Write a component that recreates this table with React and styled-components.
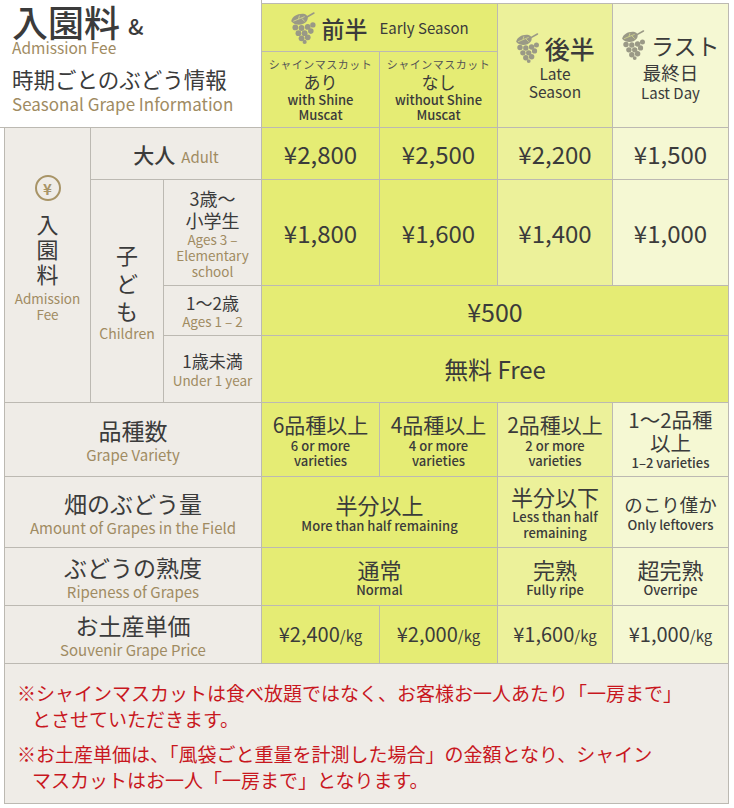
import React from 'react';
import styled, { createGlobalStyle } from 'styled-components';

const GlobalStyle = createGlobalStyle`
  body {
    margin: 0;
    background: #ffffff;
    font-family: "Noto Sans CJK JP", "Noto Sans", sans-serif;
  }
`;

const line = '1px solid #bcb9b2';

const tones = {
    white: '#ffffff',
    label: '#efece7',
    early: '#e5ec74',
    late: '#ecf19a',
    last: '#f5f8d3',
};

const Page = styled.div`
  width: 734px;
  padding: 0 0 0 4px;
  box-sizing: border-box;
`;

const Table = styled.div`
  display: grid;
  grid-template-columns: 87px 73px 98px 118px 118px 115px 116px;
  grid-template-rows: 52px 76px 52px 106px 50px 67px 74px 71px 58px 58px;
  width: 725px;
  color: #3b3b3b;
`;

const Cell = styled.div`
  grid-area: ${(p) => p.$area};
  background: ${(p) => tones[p.$tone || 'label']};
  border-right: ${line};
  border-bottom: ${line};
  border-left: ${(p) => (p.$edge ? line : 'none')};
  border-top: ${(p) => (p.$top ? line : 'none')};
  margin-top: ${(p) => (p.$top ? '3px' : '0')};
  box-sizing: border-box;
  display: flex;
  flex-direction: column;
  align-items: center;
  justify-content: center;
  text-align: center;
  min-width: 0;
`;

const HeadCell = styled.div`
  grid-area: 1 / 1 / 3 / 4;
  background: #ffffff;
  border-right: ${line};
  border-bottom: ${line};
  margin-left: -4px;
  padding: 3px 0 0 12px;
  display: flex;
  flex-direction: column;
  justify-content: flex-start;
`;

const BigTitle = styled.div`
  font-size: 36px;
  font-weight: 500;
  line-height: 37px;
  height: 36px;
  color: #3b3b3b;

  span {
    font-size: 22px;
    line-height: 1;
    margin-left: 8px;
    vertical-align: 2px;
  }
`;

const SubTitle = styled.div`
  font-size: 21.5px;
  line-height: 28px;
  color: #3b3b3b;
  margin-top: ${(p) => p.$gap || 0}px;
`;

const Tan = styled.div`
  color: #a08b62;
  font-size: ${(p) => p.$size || 14}px;
  line-height: ${(p) => p.$lh || 18}px;
`;

const Jp = styled.div`
  font-size: ${(p) => p.$size || 20}px;
  line-height: ${(p) => p.$lh || 26}px;
  font-weight: ${(p) => p.$weight || 400};
  color: #3b3b3b;
`;

const En = styled.div`
  font-size: ${(p) => p.$size || 13}px;
  line-height: ${(p) => p.$lh || 16}px;
  font-weight: ${(p) => p.$weight || 500};
  margin-left: ${(p) => p.$ml || 0}px;
  color: #3b3b3b;
`;

const Small = styled.div`
  font-size: 11px;
  line-height: 15px;
  color: #555;
  letter-spacing: 0.5px;
`;

const SeasonRow = styled.div`
  display: flex;
  align-items: center;
  gap: 4px;
`;

const Price = styled.div`
  font-size: ${(p) => p.$size || 24}px;
  line-height: 32px;
  color: #3b3b3b;

  small {
    font-size: 15px;
  }
`;

const Inline = styled.div`
  display: flex;
  align-items: baseline;
  gap: 6px;
`;

const Stack = styled.div`
  display: flex;
  flex-direction: column;
  align-items: center;
  font-size: ${(p) => p.$size}px;
  line-height: ${(p) => p.$lh}px;
  color: #3b3b3b;
`;

const FeeCol = styled(Cell)`
  justify-content: flex-start;
  padding-top: 47px;
`;

const YenMark = styled.span`
  width: 26px;
  height: 26px;
  border: 2px solid #a89467;
  border-radius: 50%;
  box-sizing: border-box;
  color: #a89467;
  font-size: 15px;
  font-weight: 700;
  line-height: 1;
  display: flex;
  align-items: center;
  justify-content: center;
  margin-bottom: 10px;
`;

const Notes = styled.div`
  width: 725px;
  box-sizing: border-box;
  background: ${tones.label};
  border-left: ${line};
  border-right: ${line};
  border-bottom: ${line};
  padding: 16px 0 15px 12px;
  height: 140px;
`;

const Note = styled.p`
  margin: 0 0 9px;
  padding-left: 15px;
  text-indent: -15px;
  color: #c8171e;
  font-size: 19px;
  line-height: 26px;
  white-space: nowrap;
`;

function Grape({ size = 28 }) {
    return (
        <svg width={size * 0.85} height={size} viewBox="0 0 26 31">
            <g fill="#9a9986">
                <path d="M1 9 C2 4 8 1 14 2 C17 3 18 6 16 9 C13 13 5 14 1 9 Z" />
                <circle cx="5" cy="15" r="2.8" />
                <circle cx="11" cy="15.5" r="2.8" />
                <circle cx="17" cy="14.5" r="2.8" />
                <circle cx="22" cy="12.5" r="2.6" />
                <circle cx="8" cy="20.5" r="2.8" />
                <circle cx="14" cy="20.5" r="2.8" />
                <circle cx="20" cy="18.5" r="2.7" />
                <circle cx="11" cy="25.5" r="2.8" />
                <circle cx="17" cy="24.5" r="2.8" />
                <circle cx="14" cy="29" r="2" />
            </g>
            <path d="M15 5.5 L23 1" stroke="#9a9986" strokeWidth="1.6" strokeLinecap="round" />
            <path d="M3 9 L14 4.5 M8 7 L9 3.5 M11 6 L14 9" stroke="#d7dc8c" strokeWidth="0.8" fill="none" />
        </svg>
    );
}

const varieties = [
    { tone: 'early', jp: '6品種以上', en: ['6 or more', 'varieties'] },
    { tone: 'early', jp: '4品種以上', en: ['4 or more', 'varieties'] },
    { tone: 'late', jp: '2品種以上', en: ['2 or more', 'varieties'] },
];

const adult = [['early', '¥2,800'], ['early', '¥2,500'], ['late', '¥2,200'], ['last', '¥1,500']];
const child = [['early', '¥1,800'], ['early', '¥1,600'], ['late', '¥1,400'], ['last', '¥1,000']];
const souvenir = [['early', '¥2,400'], ['early', '¥2,000'], ['late', '¥1,600'], ['last', '¥1,000']];

function Label({ area, jp, en }) {
    return (
        <Cell $area={area} $edge>
            <Jp $size={23} $lh={30}>{jp}</Jp>
            <Tan $size={15} $lh={19}>{en}</Tan>
        </Cell>
    );
}

export default function App() {
    return (
        <Page>
            <GlobalStyle />
            <Table>
                <HeadCell>
                    <BigTitle>入園料<span>&amp;</span></BigTitle>
                    <Tan $size={15.5} $lh={16}>Admission Fee</Tan>
                    <SubTitle $gap={10}>時期ごとのぶどう情報</SubTitle>
                    <Tan $size={17} $lh={22}>Seasonal Grape Information</Tan>
                </HeadCell>

                <Cell $area="1 / 4 / 2 / 6" $tone="early" $top>
                    <SeasonRow>
                        <Grape size={32} />
                        <Jp $size={23} $lh={30} $weight={500}>前半</Jp>
                        <En $size={15} $lh={20} $weight={400} $ml={8}>Early Season</En>
                    </SeasonRow>
                </Cell>
                <Cell $area="2 / 4 / 3 / 5" $tone="early">
                    <Small>シャインマスカット</Small>
                    <Jp $size={17} $lh={20}>あり</Jp>
                    <En $size={13} $lh={15}>with Shine<br />Muscat</En>
                </Cell>
                <Cell $area="2 / 5 / 3 / 6" $tone="early">
                    <Small>シャインマスカット</Small>
                    <Jp $size={17} $lh={20}>なし</Jp>
                    <En $size={13} $lh={15}>without Shine<br />Muscat</En>
                </Cell>
                <Cell $area="1 / 6 / 3 / 7" $tone="late" $top>
                    <SeasonRow>
                        <Grape size={30} />
                        <Jp $size={25} $lh={32} $weight={500}>後半</Jp>
                    </SeasonRow>
                    <En $size={15.5} $lh={18} $weight={400}>Late<br />Season</En>
                </Cell>
                <Cell $area="1 / 7 / 3 / 8" $tone="last" $top>
                    <SeasonRow>
                        <Grape size={30} />
                        <Jp $size={23} $lh={32}>ラスト</Jp>
                    </SeasonRow>
                    <Jp $size={18.5} $lh={22}>最終日</Jp>
                    <En $size={15} $lh={20} $weight={400}>Last Day</En>
                </Cell>

                <FeeCol $area="3 / 1 / 7 / 2" $edge>
                    <YenMark>¥</YenMark>
                    <Stack $size={22} $lh={25}>
                        <span>入</span>
                        <span>園</span>
                        <span>料</span>
                    </Stack>
                    <Tan $size={13.5} $lh={16} style={{ marginTop: 4 }}>Admission<br />Fee</Tan>
                </FeeCol>

                <Cell $area="3 / 2 / 4 / 4">
                    <Inline>
                        <Jp $size={21} $lh={28} $weight={500}>大人</Jp>
                        <Tan $size={15}>Adult</Tan>
                    </Inline>
                </Cell>
                {adult.map(([tone, p], i) => (
                    <Cell key={'a' + i} $area={`3 / ${i + 4} / 4 / ${i + 5}`} $tone={tone}>
                        <Price>{p}</Price>
                    </Cell>
                ))}

                <Cell $area="4 / 2 / 7 / 3">
                    <Stack $size={22} $lh={28}>
                        <span>子</span>
                        <span>ど</span>
                        <span>も</span>
                    </Stack>
                    <Tan $size={14} $lh={19}>Children</Tan>
                </Cell>
                <Cell $area="4 / 3 / 5 / 4">
                    <Jp $size={18} $lh={22}>3歳〜<br />小学生</Jp>
                    <Tan $size={13.5} $lh={16}>Ages 3 –<br />Elementary<br />school</Tan>
                </Cell>
                {child.map(([tone, p], i) => (
                    <Cell key={'c' + i} $area={`4 / ${i + 4} / 5 / ${i + 5}`} $tone={tone}>
                        <Price>{p}</Price>
                    </Cell>
                ))}

                <Cell $area="5 / 3 / 6 / 4">
                    <Jp $size={17} $lh={21}>1〜2歳</Jp>
                    <Tan $size={13.5} $lh={17}>Ages 1 – 2</Tan>
                </Cell>
                <Cell $area="5 / 4 / 6 / 8" $tone="early">
                    <Price $size={25}>¥500</Price>
                </Cell>

                <Cell $area="6 / 3 / 7 / 4">
                    <Jp $size={17} $lh={23}>1歳未満</Jp>
                    <Tan $size={13.5} $lh={17}>Under 1 year</Tan>
                </Cell>
                <Cell $area="6 / 4 / 7 / 8" $tone="early">
                    <Price $size={24}>無料 Free</Price>
                </Cell>

                <Label area="7 / 1 / 8 / 4" jp="品種数" en="Grape Variety" />
                {varieties.map((v, i) => (
                    <Cell key={'v' + i} $area={`7 / ${i + 4} / 8 / ${i + 5}`} $tone={v.tone}>
                        <Jp $size={21} $lh={27}>{v.jp}</Jp>
                        <En $size={13} $lh={15}>{v.en[0]}<br />{v.en[1]}</En>
                    </Cell>
                ))}
                <Cell $area="7 / 7 / 8 / 8" $tone="last">
                    <Jp $size={20.5} $lh={23}>1〜2品種<br />以上</Jp>
                    <En $size={13} $lh={17}>1–2 varieties</En>
                </Cell>

                <Label area="8 / 1 / 9 / 4" jp="畑のぶどう量" en="Amount of Grapes in the Field" />
                <Cell $area="8 / 4 / 9 / 6" $tone="early">
                    <Jp $size={22} $lh={28}>半分以上</Jp>
                    <En $size={13} $lh={16}>More than half remaining</En>
                </Cell>
                <Cell $area="8 / 6 / 9 / 7" $tone="late">
                    <Jp $size={22} $lh={26}>半分以下</Jp>
                    <En $size={13} $lh={16}>Less than half<br />remaining</En>
                </Cell>
                <Cell $area="8 / 7 / 9 / 8" $tone="last">
                    <Jp $size={18.5} $lh={25}>のこり僅か</Jp>
                    <En $size={13} $lh={16}>Only leftovers</En>
                </Cell>

                <Label area="9 / 1 / 10 / 4" jp="ぶどうの熟度" en="Ripeness of Grapes" />
                <Cell $area="9 / 4 / 10 / 6" $tone="early">
                    <Jp $size={22} $lh={26}>通常</Jp>
                    <En $size={13} $lh={16}>Normal</En>
                </Cell>
                <Cell $area="9 / 6 / 10 / 7" $tone="late">
                    <Jp $size={22} $lh={26}>完熟</Jp>
                    <En $size={13} $lh={16}>Fully ripe</En>
                </Cell>
                <Cell $area="9 / 7 / 10 / 8" $tone="last">
                    <Jp $size={22} $lh={26}>超完熟</Jp>
                    <En $size={13} $lh={16}>Overripe</En>
                </Cell>

                <Label area="10 / 1 / 11 / 4" jp="お土産単価" en="Souvenir Grape Price" />
                {souvenir.map(([tone, p], i) => (
                    <Cell key={'s' + i} $area={`10 / ${i + 4} / 11 / ${i + 5}`} $tone={tone}>
                        <Price $size={20}>{p}<small>/kg</small></Price>
                    </Cell>
                ))}
            </Table>

            <Notes>
                <Note>※シャインマスカットは食べ放題ではなく、お客様お一人あたり「一房まで」<br />とさせていただきます。</Note>
                <Note>※お土産単価は、「風袋ごと重量を計測した場合」の金額となり、シャイン<br />マスカットはお一人「一房まで」となります。</Note>
            </Notes>
        </Page>
    );
}
